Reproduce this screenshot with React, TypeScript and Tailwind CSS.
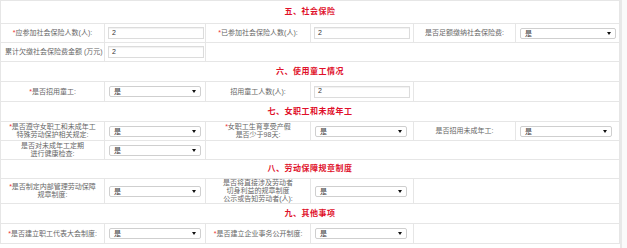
import React from "react"

const cols = [104, 101, 105, 103, 102, 104]

const cell = "border border-[#e6e6e6] p-0 align-middle"
const lbl = "text-[7px] leading-[8px] text-[#666] text-center px-[2px]"

function Star() {
  return <span className="text-[#e33]">*</span>
}

function Pick({ w = 92 }: { w?: number }) {
  return (
    <div
      className="ml-[4px] h-[11px] border border-[#cfcfcf] rounded-[2px] bg-white flex items-center justify-between pl-[4px] pr-[4px] text-[7px] leading-[7px] text-[#333]"
      style={{ width: w }}
    >
      <span>是</span>
      <svg width="4" height="3" viewBox="0 0 4 3" className="block">
        <path d="M0 0H4L2 3Z" fill="#111" />
      </svg>
    </div>
  )
}

function Field({ value }: { value: string }) {
  return (
    <div className="ml-[3px] w-[96px] h-[12px] border border-[#dcdcdc] shadow-[inset_0_1px_1px_rgba(0,0,0,0.06)] bg-white flex items-center px-[3px] text-[7px] text-[#333]">
      {value}
    </div>
  )
}

function Head({ title, h }: { title: string; h: number }) {
  return (
    <tr style={{ height: h }}>
      <td colSpan={6} className={`${cell} text-center text-[8px] font-bold text-[#e0102a] tracking-[0.5px]`}>
        {title}
      </td>
    </tr>
  )
}

export default function App() {
  return (
    <div className="w-[627px] h-[248px] bg-white font-['Liberation_Sans','Noto_Sans_CJK_SC',sans-serif] flex overflow-hidden">
      <table className="table-fixed border-collapse w-[619px] h-fit">
        <colgroup>
          {cols.map((c, i) => (
            <col key={i} style={{ width: c }} />
          ))}
        </colgroup>
        <tbody>
          <Head title="五、社会保险" h={23} />
          <tr className="h-[19px]">
            <td className={cell}>
              <div className={lbl}>
                <Star />应参加社会保险人数(人):
              </div>
            </td>
            <td className={cell}>
              <Field value="2" />
            </td>
            <td className={cell}>
              <div className={lbl}>
                <Star />已参加社会保险人数(人):
              </div>
            </td>
            <td className={cell}>
              <Field value="2" />
            </td>
            <td className={cell}>
              <div className={lbl}>是否足额缴纳社会保险费:</div>
            </td>
            <td className={cell}>
              <Pick w={96} />
            </td>
          </tr>
          <tr className="h-[19px]">
            <td className={cell}>
              <div className="text-[7px] leading-[8px] text-[#666] whitespace-nowrap pl-[4px]">
                累计欠缴社会保险费金额 (万元)
              </div>
            </td>
            <td className={cell}>
              <Field value="2" />
            </td>
            <td className={cell} colSpan={4}></td>
          </tr>

          <Head title="六、使用童工情况" h={20} />
          <tr className="h-[20px]">
            <td className={cell}>
              <div className={lbl}>
                <Star />是否招用童工:
              </div>
            </td>
            <td className={cell}>
              <Pick />
            </td>
            <td className={cell}>
              <div className={lbl}>招用童工人数(人):</div>
            </td>
            <td className={cell}>
              <Field value="2" />
            </td>
            <td className={cell} colSpan={2}></td>
          </tr>

          <Head title="七、女职工和未成年工" h={20} />
          <tr className="h-[19px]">
            <td className={cell}>
              <div className={lbl}>
                <Star />是否遵守女职工和未成年工
                <br />
                特殊劳动保护相关规定:
              </div>
            </td>
            <td className={cell}>
              <Pick />
            </td>
            <td className={cell}>
              <div className={lbl}>
                <Star />女职工生育享受产假
                <br />
                是否少于98天:
              </div>
            </td>
            <td className={cell}>
              <Pick />
            </td>
            <td className={cell}>
              <div className={lbl}>是否招用未成年工:</div>
            </td>
            <td className={cell}>
              <Pick />
            </td>
          </tr>
          <tr className="h-[19px]">
            <td className={cell}>
              <div className={lbl}>
                是否对未成年工定期
                <br />
                进行健康检查:
              </div>
            </td>
            <td className={cell}>
              <Pick />
            </td>
            <td className={`${cell} border-t-0`} colSpan={4}></td>
          </tr>

          <Head title="八、劳动保障规章制度" h={19} />
          <tr className="h-[25px]">
            <td className={cell}>
              <div className={lbl}>
                <Star />是否制定内部管理劳动保障
                <br />
                规章制度:
              </div>
            </td>
            <td className={cell}>
              <Pick />
            </td>
            <td className={cell}>
              <div className={lbl}>
                是否将直接涉及劳动者
                <br />
                切身利益的规章制度
                <br />
                公示或告知劳动者(人):
              </div>
            </td>
            <td className={cell}>
              <Pick />
            </td>
            <td className={cell} colSpan={2}></td>
          </tr>

          <Head title="九、其他事项" h={20} />
          <tr className="h-[20px]">
            <td className={cell}>
              <div className={lbl}>
                <Star />是否建立职工代表大会制度:
              </div>
            </td>
            <td className={cell}>
              <Pick />
            </td>
            <td className={cell}>
              <div className={lbl}>
                <Star />是否建立企业事务公开制度:
              </div>
            </td>
            <td className={cell}>
              <Pick />
            </td>
            <td className={cell} colSpan={2}></td>
          </tr>
        </tbody>
      </table>
      <div className="w-[2px] h-full bg-[#e8e8e8]" />
      <div className="flex-1 h-full bg-[#fafafa]" />
    </div>
  )
}
